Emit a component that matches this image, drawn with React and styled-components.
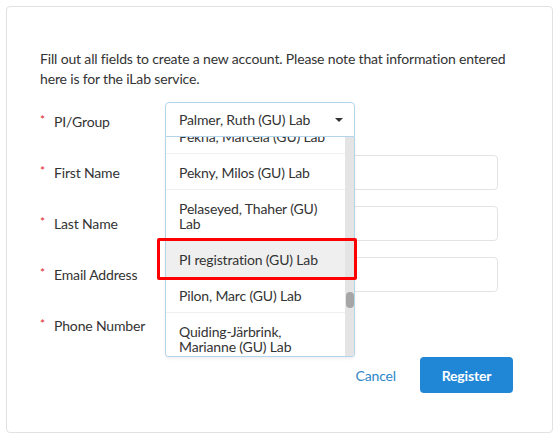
import React from 'react';
import styled, { createGlobalStyle } from 'styled-components';

const Global = createGlobalStyle`
  html, body { margin: 0; padding: 0; background: #fff; }
  body { font-family: Lato, "Noto Sans", sans-serif; color: #333; letter-spacing: -0.16px; }
`;

const Card = styled.div`
  box-sizing: border-box;
  width: 547px;
  height: 427px;
  margin: 6px 0 0 6px;
  border: 1px solid #e2e2e2;
  border-radius: 4px;
  padding: 42px 39px 0 33px;
`;

const Intro = styled.p`
  margin: 0 0 7px;
  font-size: 14px;
  line-height: 20px;
  color: #333;
`;

const Form = styled.div`
  display: grid;
  grid-template-columns: 125px 1fr;
  grid-auto-rows: 51px;
  align-items: center;
`;

const Label = styled.div`
  display: flex;
  align-items: flex-start;
  font-size: 14px;
  line-height: 17px;
  color: #333;
`;

const Star = styled.span`
  width: 14px;
  color: #e0262b;
  font-size: 12px;
  line-height: 13px;
`;

const Field = styled.div`
  position: relative;
  height: 35px;
  margin-top: ${p => p.$lift || 0}px;
`;

const Input = styled.div`
  box-sizing: border-box;
  width: 333px;
  height: 35px;
  border: 1px solid #e3e3e3;
  border-radius: 4px;
  background: #fff;
`;

const Select = styled.div`
  box-sizing: border-box;
  width: 190px;
  height: 35px;
  border: 1px solid #b4d4ea;
  border-radius: 4px 4px 0 0;
  padding: 0 11px 0 13px;
  display: flex;
  align-items: center;
  justify-content: space-between;
  font-size: 14px;
  color: #333;
  background: #fff;
`;

const Caret = styled.span`
  width: 0;
  height: 0;
  border-left: 4px solid transparent;
  border-right: 4px solid transparent;
  border-top: 4px solid #333;
`;

const Dropdown = styled.div`
  position: absolute;
  top: 100%;
  left: 0;
  z-index: 3;
  box-sizing: border-box;
  width: 190px;
  height: 220px;
  display: flex;
  border: 1px solid #b4d4ea;
  border-top: none;
  border-radius: 0 0 4px 4px;
  background: #fff;
  overflow: hidden;
  box-shadow: 0 2px 3px rgba(0, 0, 0, 0.06);
`;

const Viewport = styled.div`
  flex: 1;
  overflow: hidden;
`;

const ListInner = styled.div`
  margin-top: -19px;
`;

const Item = styled.div`
  padding: 11px 14px 9px 13px;
  font-size: 14px;
  line-height: 15px;
  color: #333;
  border-bottom: 1px solid #f0f0f0;
  background: ${p => (p.$active ? '#efefef' : '#fff')};
`;

const Marker = styled.div`
  position: absolute;
  top: 136px;
  left: -8px;
  width: 200px;
  height: 42px;
  box-sizing: border-box;
  border: 3px solid #ff0000;
  border-radius: 2px;
  z-index: 5;
  pointer-events: none;
`;

const Track = styled.div`
  width: 9px;
  flex: none;
  padding-top: 155px;
  box-sizing: border-box;
  background: #e4e4e4;
  display: flex;
  justify-content: flex-end;
`;

const Thumb = styled.div`
  width: 8px;
  height: 16px;
  border-radius: 4px;
  background: #a6a6a6;
`;

const Actions = styled.div`
  display: flex;
  justify-content: flex-end;
  align-items: center;
  gap: 24px;
  margin-top: 6px;
`;

const CancelLink = styled.span`
  font-size: 14px;
  color: #2e86c8;
`;

const Button = styled.div`
  box-sizing: border-box;
  width: 93px;
  height: 36px;
  border-radius: 4px;
  background: #2086d6;
  color: #fff;
  font-weight: 700;
  font-size: 14px;
  display: flex;
  align-items: center;
  justify-content: center;
`;

const options = [
  'Pekna, Marcela (GU) Lab',
  'Pekny, Milos (GU) Lab',
  'Pelaseyed, Thaher (GU) Lab',
  'PI registration (GU) Lab',
  'Pilon, Marc (GU) Lab',
  'Quiding-Järbrink, Marianne (GU) Lab',
];

const Lbl = ({ children }) => (
  <Label>
    <Star>*</Star>
    {children}
  </Label>
);

export default function App() {
  return (
    <>
      <Global />
      <Card>
        <Intro>
          Fill out all fields to create a new account. Please note that information entered
          here is for the iLab service.
        </Intro>
        <Form>
          <Lbl>PI/Group</Lbl>
          <Field $lift={-4}>
            <Select>
              <span>Palmer, Ruth (GU) Lab</span>
              <Caret />
            </Select>
            <Dropdown>
              <Viewport>
                <ListInner>
                  {options.map(o => (
                    <Item key={o} $active={o === 'PI registration (GU) Lab'}>
                      {o}
                    </Item>
                  ))}
                </ListInner>
              </Viewport>
              <Track>
                <Thumb />
              </Track>
            </Dropdown>
            <Marker />
          </Field>
          <Lbl>First Name</Lbl>
          <Field><Input /></Field>
          <Lbl>Last Name</Lbl>
          <Field><Input /></Field>
          <Lbl>Email Address</Lbl>
          <Field><Input /></Field>
          <Lbl>Phone Number</Lbl>
          <Field />
        </Form>
        <Actions>
          <CancelLink>Cancel</CancelLink>
          <Button>Register</Button>
        </Actions>
      </Card>
    </>
  );
}
